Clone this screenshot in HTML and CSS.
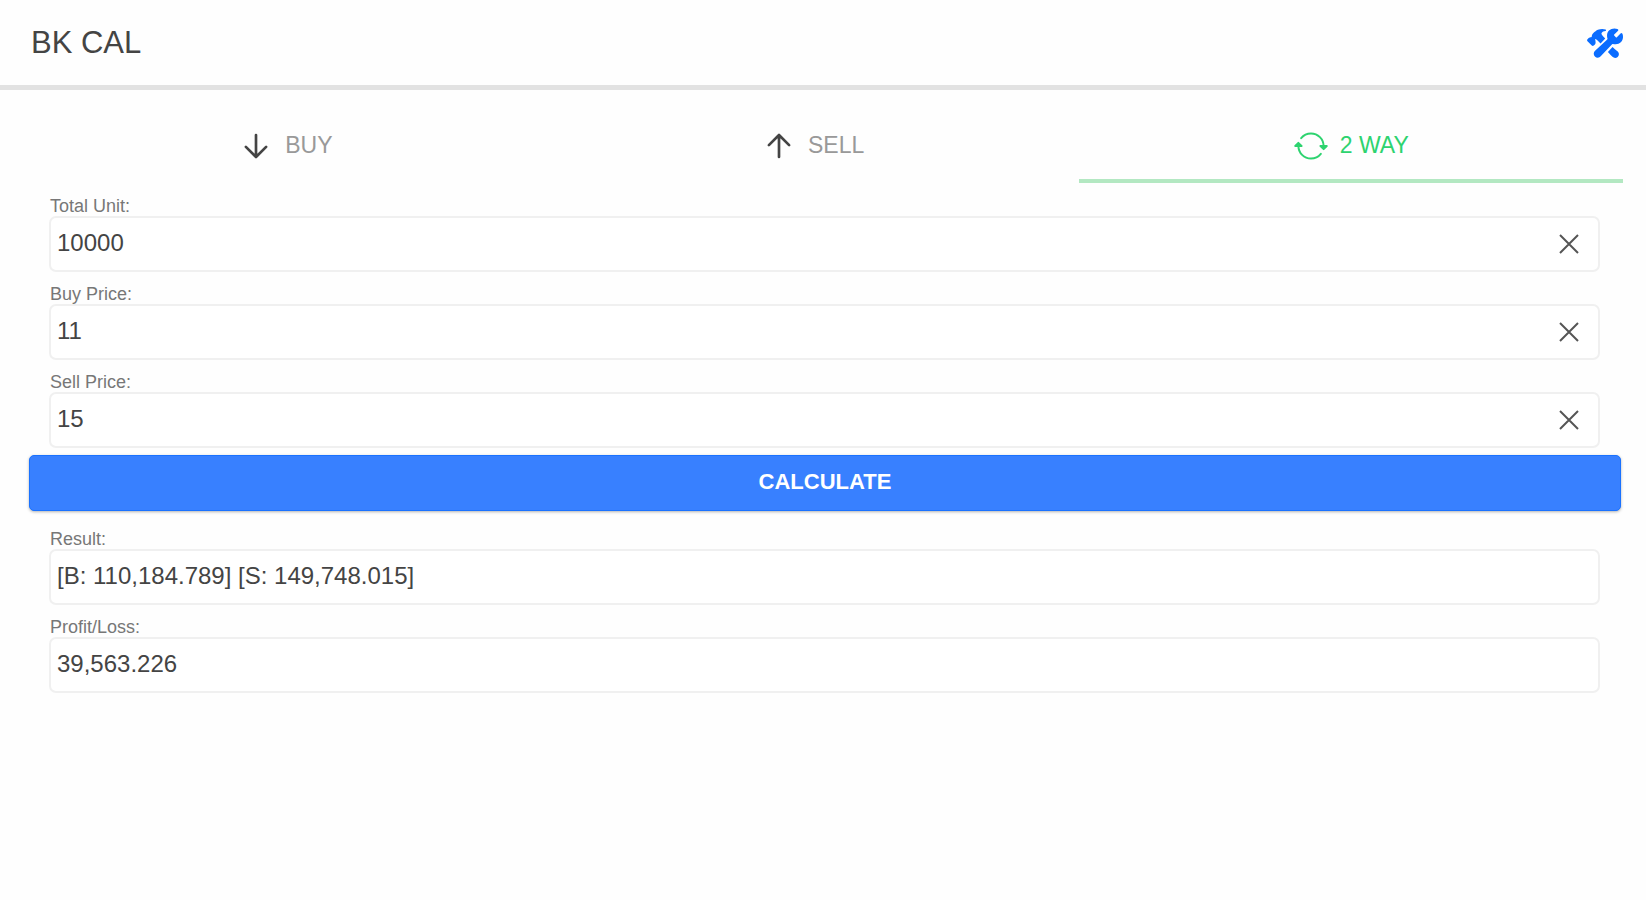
FILE: index.html
```
<!DOCTYPE html>
<html lang="en">

<head>
    <meta charset="UTF-8">
    <meta name="viewport" content="width=device-width, initial-scale=1.0">
    <title>BK CAL</title>
    <link rel="stylesheet" href="styles.css">
</head>

<body>
    <header>
        <h1>BK CAL</h1>
        <button type="button" class="tools" aria-label="Tools">
            <svg class="icon" viewBox="0 0 512 512" fill="currentColor">
                <path d="M503.600 126.200a16.850 16.850 0 00-27.070-4.550l-51.150 51.150a11.150 11.150 0 01-15.660 0l-22.480-22.480a11.170 11.170 0 010-15.670l50.880-50.890a16.850 16.850 0 00-5.270-27.400c-39.710-17-89.080-7.450-120 23.290-26.810 26.610-34.830 68-22 113.700a11 11 0 01-3.160 11.100L114.800 365.100a56.760 56.760 0 1080.140 80.180L357 272.080a11 11 0 0110.900-3.170c45 12 86 4 112.430-22 15.200-15 25.810-36.170 29.890-59.710 3.830-22.200 1.410-44.120-6.620-61z" />
                <path d="M437 378c-14-12-44-38-74-66l-66 71c28 30 54 58 65 70 22 21 54 21 74 1l3-3c21-20 20-52-2-73z" />
                <path d="M118 215c0-7-3-13-3-15 5-1 14 4 14 4 10 6 23 18 42 36l22 22 66-70-28-28c-24-24-29-41-23-52 8-15 30-22 54-26 12-2 12-18 1-22-28-11-74-10-108 4-23 10-43 26-67 50-15 15-18 30-20 44-1 7-5 12-10 13-13 1-25 2-34 11L7 203c-8 8-8 20 0 28l61 62c8 8 20 8 28 0l17-17c9-9 10-22 9-34 0-9-4-17-4-27z" />
            </svg>
        </button>
    </header>

    <main>
        <nav class="tabs">
            <button type="button">
                <svg class="icon arrow" viewBox="0 0 512 512">
                    <path d="M112 268l144 144 144-144M256 392V100" />
                </svg>
                BUY
            </button>
            <button type="button">
                <svg class="icon arrow" viewBox="0 0 512 512">
                    <path d="M112 244l144-144 144 144M256 120v292" />
                </svg>
                SELL
            </button>
            <button type="button" class="active">
                <svg class="icon sync" viewBox="0 0 512 512">
                    <path d="M435 286v-30c0-99-80-179-179-179a179 179 0 00-140 67M77 226v30c0 99 80 179 179 179a180 180 0 00140-67" />
                    <path class="head" d="M32 256l44-44 46 44zM480 256l-44 44-46-44z" />
                </svg>
                2 WAY
            </button>
        </nav>

        <form id="calForm">
            <div class="field">
                <label for="totalUnit">Total Unit:</label>
                <div class="box">
                    <input type="text" inputmode="decimal" id="totalUnit" value="10000">
                    <button type="button" class="clear" aria-label="Clear total unit">
                        <svg viewBox="0 0 20 20"><path d="M1 1l18 18M19 1L1 19" /></svg>
                    </button>
                </div>
            </div>
            <div class="field">
                <label for="buyPrice">Buy Price:</label>
                <div class="box">
                    <input type="text" inputmode="decimal" id="buyPrice" value="11">
                    <button type="button" class="clear" aria-label="Clear buy price">
                        <svg viewBox="0 0 20 20"><path d="M1 1l18 18M19 1L1 19" /></svg>
                    </button>
                </div>
            </div>
            <div class="field">
                <label for="sellPrice">Sell Price:</label>
                <div class="box">
                    <input type="text" inputmode="decimal" id="sellPrice" value="15">
                    <button type="button" class="clear" aria-label="Clear sell price">
                        <svg viewBox="0 0 20 20"><path d="M1 1l18 18M19 1L1 19" /></svg>
                    </button>
                </div>
            </div>

            <button type="button" class="calculate">CALCULATE</button>

            <div class="field">
                <label for="result">Result:</label>
                <div class="box">
                    <input type="text" id="result" value="[B: 110,184.789] [S: 149,748.015]" readonly>
                </div>
            </div>
            <div class="field">
                <label for="profit">Profit/Loss:</label>
                <div class="box">
                    <input type="text" id="profit" value="39,563.226" readonly>
                </div>
            </div>
        </form>
    </main>

    <script>
        // empty the input next to the clicked cross
        document.querySelectorAll('.clear').forEach(button => {
            button.addEventListener('click', function () {
                const input = button.parentElement.querySelector('input');
                input.value = '';
                input.focus();
            });
        });
    </script>
</body>

</html>
```
FILE: styles.css
```
* {
    box-sizing: border-box;
}

body {
    margin: 0;
    background-color: #fefefe;
    color: #444;
    font-family: "Liberation Sans", Arial, sans-serif;
}

button {
    padding: 0;
    border: none;
    background: none;
    font-family: inherit;
    cursor: pointer;
}

.icon {
    display: block;
    width: 36px;
    height: 36px;
}

header {
    display: flex;
    justify-content: space-between;
    align-items: center;
    height: 90px;
    padding: 1px 23px 0 31px;
    border-bottom: 5px solid #e2e2e2;
}

header h1 {
    margin: 0;
    font-size: 31px;
    font-weight: normal;
}

.tools {
    color: #0a6cff;
}

.tabs {
    display: flex;
    padding: 18px 23px 0 24px;
}

.tabs button {
    flex: 1 1 auto;
    display: flex;
    justify-content: center;
    align-items: center;
    gap: 11px;
    height: 75px;
    padding-top: 4px;
    border-bottom: 4px solid transparent;
    color: #999;
    font-size: 23px;
}

.tabs .active {
    border-bottom-color: #b3e8c2;
    color: #2dd36f;
}

.arrow,
.sync {
    fill: none;
    stroke: #444;
    stroke-width: 38;
    stroke-linecap: round;
    stroke-linejoin: round;
}

.sync {
    stroke: #2dd36f;
    stroke-width: 28;
}

.sync .head {
    fill: #2dd36f;
}

form {
    padding: 13px 25px 0 29px;
}

.field {
    margin: 0 21px 12px 20px;
}

.field label {
    display: block;
    padding-left: 1px;
    color: #777;
    font-size: 18px;
    line-height: 20px;
}

.box {
    display: flex;
    align-items: center;
    height: 56px;
    border: 2px solid #f0f0f0;
    border-radius: 7px;
    background-color: #fff;
}

.box input {
    flex: 1;
    min-width: 0;
    height: 52px;
    padding: 0 6px 2px;
    border: none;
    outline: none;
    background: none;
    color: #444;
    font-family: inherit;
    font-size: 24px;
}

.clear {
    width: 58px;
    height: 52px;
}

.clear svg {
    display: block;
    width: 20px;
    height: 20px;
    margin: 0 auto;
    fill: none;
    stroke: #555;
    stroke-width: 2;
}

.calculate {
    display: block;
    width: 100%;
    height: 56px;
    margin: -5px 0 18px;
    padding-bottom: 3px;
    border: 1px solid #1a72ff;
    border-radius: 5px;
    background-color: #3880ff;
    box-shadow: 0 1px 3px rgba(0, 0, 0, 0.3);
    color: #fff;
    font-size: 22px;
    font-weight: bold;
}
```
